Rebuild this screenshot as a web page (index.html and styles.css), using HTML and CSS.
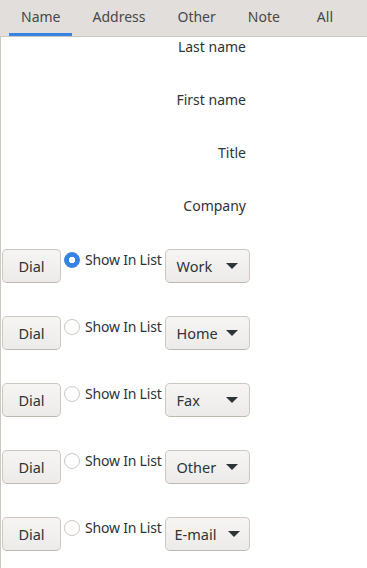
FILE: index.html
```html
<!DOCTYPE html>
<html lang="en">
<head>
    <title>Contact</title>
    <link rel="stylesheet" href="styles.css">
</head>
<body>
    <div class="tabs">
        <div class="tab active">Name</div>
        <div class="tab">Address</div>
        <div class="tab">Other</div>
        <div class="tab">Note</div>
        <div class="tab last">All</div>
    </div>
    <div class="page">
        <div class="fields">
            <div class="field">Last name</div>
            <div class="field">First name</div>
            <div class="field">Title</div>
            <div class="field">Company</div>
        </div>
        <div class="phones">
            <div class="phone">
                <button class="btn dial">Dial</button>
                <label class="show"><span class="radio checked"></span>Show In List</label>
                <button class="btn combo">Work <span class="arrow"></span></button>
            </div>
            <div class="phone">
                <button class="btn dial">Dial</button>
                <label class="show"><span class="radio"></span>Show In List</label>
                <button class="btn combo">Home <span class="arrow"></span></button>
            </div>
            <div class="phone">
                <button class="btn dial">Dial</button>
                <label class="show"><span class="radio"></span>Show In List</label>
                <button class="btn combo">Fax <span class="arrow"></span></button>
            </div>
            <div class="phone">
                <button class="btn dial">Dial</button>
                <label class="show"><span class="radio"></span>Show In List</label>
                <button class="btn combo">Other <span class="arrow"></span></button>
            </div>
            <div class="phone">
                <button class="btn dial">Dial</button>
                <label class="show"><span class="radio"></span>Show In List</label>
                <button class="btn combo email">E-mail <span class="arrow"></span></button>
            </div>
        </div>
    </div>
</body>
</html>
```

FILE: styles.css
```css
body {
    margin: 0;
    font-family: 'Noto Sans', 'DejaVu Sans', sans-serif;
    font-size: 14px;
    color: #2e3436;
    background: #ffffff;
}
.tabs {
    display: flex;
    gap: 8px;
    height: 37px;
    padding-left: 9px;
    background: #e1dedb;
    border-bottom: 1px solid #cdc7c2;
    box-sizing: border-box;
}
.tab {
    padding: 0 12px;
    line-height: 33px;
    color: #484848;
    border-bottom: 3px solid transparent;
}
.tab.active {
    border-bottom-color: #3584e4;
}
.tab.last {
    margin-left: 5px;
}
.page {
    border-left: 1px solid #cdc7c2;
    min-height: 531px;
}
.fields {
    width: 245px;
}
.field {
    height: 53px;
    text-align: right;
    line-height: 20px;
}
.phone {
    display: flex;
    align-items: flex-start;
    height: 67px;
    padding-left: 1px;
}
.btn {
    font-family: inherit;
    font-size: 14.5px;
    color: #2e3436;
    height: 34px;
    background: linear-gradient(#f6f5f4, #edebe9);
    border: 1px solid #cdc7c2;
    border-bottom-color: #bfb8b1;
    border-radius: 5px;
    padding: 0;
}
.dial {
    width: 59px;
}
.show {
    display: flex;
    align-items: center;
    gap: 5px;
    margin: 1px 3px 0 3px;
    line-height: 20px;
    letter-spacing: -0.2px;
}
.radio {
    width: 14px;
    height: 14px;
    border: 1px solid #cdc7c2;
    border-radius: 50%;
    background: #fff;
    box-sizing: content-box;
}
.radio.checked {
    border-color: #3584e4;
    background: radial-gradient(circle, #fff 0 3px, #3584e4 3.5px);
}
.combo {
    width: 85px;
    display: flex;
    align-items: center;
    justify-content: space-between;
    padding: 0 11px 0 11px;
}
.combo.email {
    padding: 0 9px 0 9px;
}
.arrow {
    width: 0;
    height: 0;
    border-left: 6px solid transparent;
    border-right: 6px solid transparent;
    border-top: 6px solid #2e3436;
}
```
